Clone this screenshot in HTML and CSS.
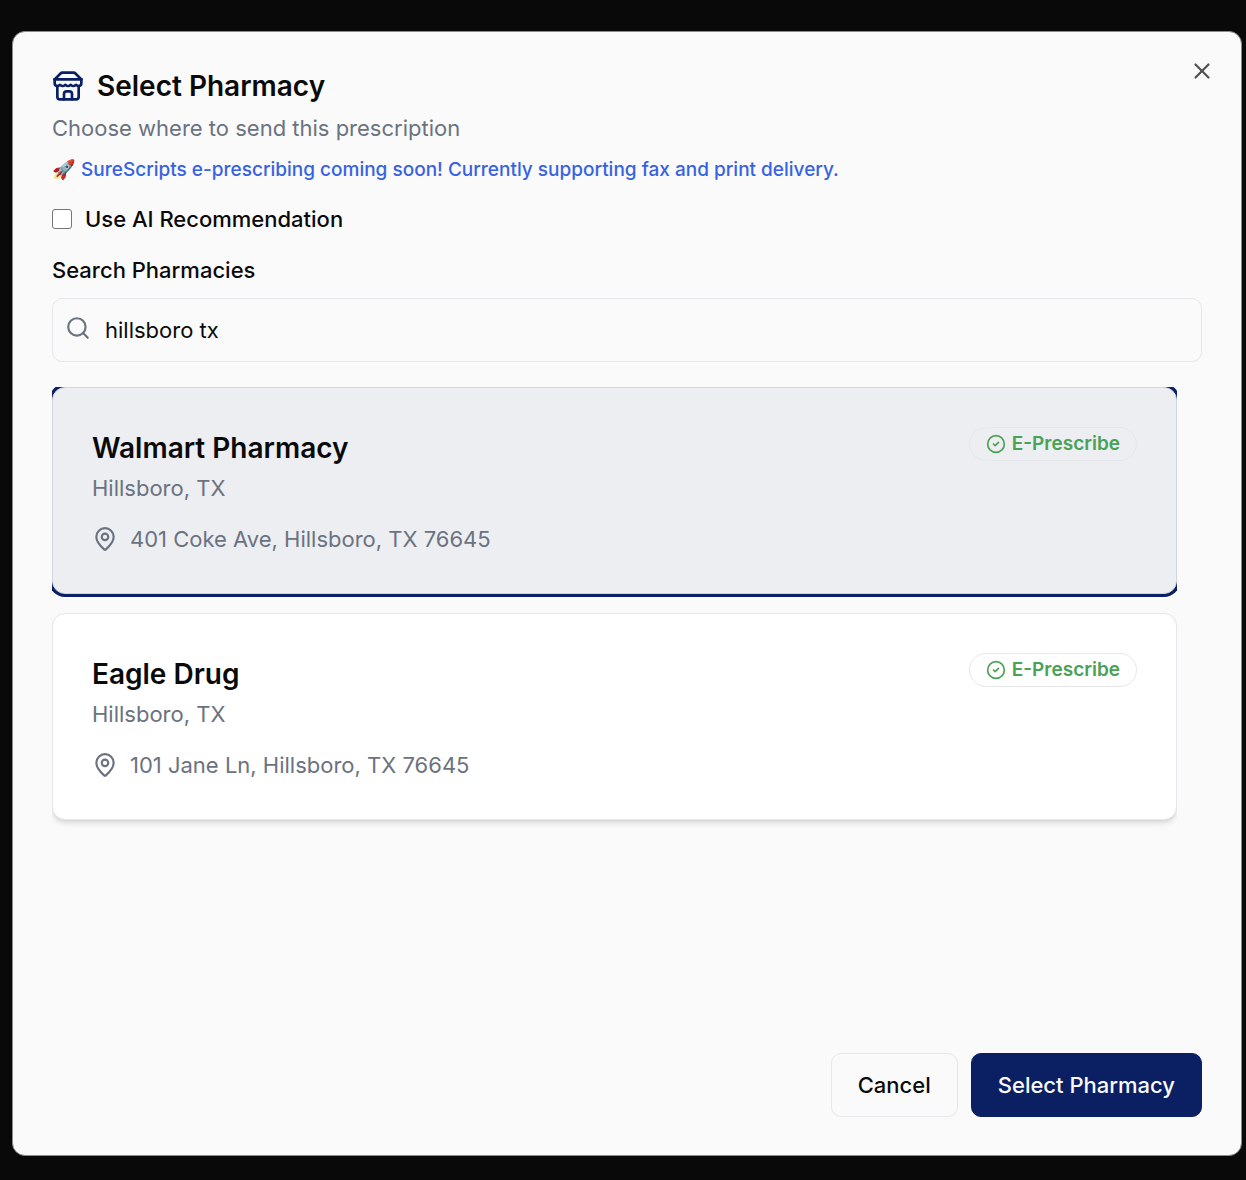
FILE: index.html
```html
<!DOCTYPE html>
<html lang="en">
<head>
<meta charset="utf-8">
<meta name="viewport" content="width=device-width, initial-scale=1">
<title>Select Pharmacy</title>
<link rel="stylesheet" href="styles.css">
</head>
<body>
<main class="dialog" role="dialog" aria-labelledby="dialog-title">
  <header class="header">
    <div class="header-text">
      <h1 class="title" id="dialog-title">
        <svg class="icon icon-store" viewBox="0 0 24 24" aria-hidden="true"><path d="m2 7 4.41-4.41A2 2 0 0 1 7.83 2h8.34a2 2 0 0 1 1.42.59L22 7"/><path d="M4 12v8a2 2 0 0 0 2 2h12a2 2 0 0 0 2-2v-8"/><path d="M15 22v-4a2 2 0 0 0-2-2h-2a2 2 0 0 0-2 2v4"/><path d="M2 7h20"/><path d="M22 7v3a2 2 0 0 1-2 2a2.7 2.7 0 0 1-1.59-.63.7.7 0 0 0-.82 0A2.7 2.7 0 0 1 16 12a2.7 2.7 0 0 1-1.59-.63.7.7 0 0 0-.82 0A2.7 2.7 0 0 1 12 12a2.7 2.7 0 0 1-1.59-.63.7.7 0 0 0-.82 0A2.7 2.7 0 0 1 8 12a2.7 2.7 0 0 1-1.59-.63.7.7 0 0 0-.82 0A2.7 2.7 0 0 1 4 12a2 2 0 0 1-2-2V7"/></svg>
        Select Pharmacy
      </h1>
      <p class="subtitle">Choose where to send this prescription</p>
      <p class="notice">🚀 SureScripts e-prescribing coming soon! Currently supporting fax and print delivery.</p>
    </div>
    <button class="close" type="button" aria-label="Close">
      <svg class="icon icon-close" viewBox="0 0 24 24" aria-hidden="true"><path d="M18 6 6 18"/><path d="m6 6 12 12"/></svg>
    </button>
  </header>

  <label class="check-row"><input class="checkbox" type="checkbox">Use AI Recommendation</label>

  <div class="search">
    <label class="search-label" for="search">Search Pharmacies</label>
    <div class="search-box">
      <svg class="icon icon-search" viewBox="0 0 24 24" aria-hidden="true"><circle cx="11" cy="11" r="8"/><path d="m21 21-4.3-4.3"/></svg>
      <input class="search-input" id="search" type="text" value="hillsboro tx">
    </div>
  </div>

  <section class="results" aria-label="Pharmacies">
    <article class="card card-selected">
      <div class="card-top">
        <div>
          <h2 class="card-name">Walmart Pharmacy</h2>
          <p class="card-city">Hillsboro, TX</p>
        </div>
        <span class="badge"><svg class="icon icon-check" viewBox="0 0 24 24" aria-hidden="true"><circle cx="12" cy="12" r="10"/><path d="m9 12 2 2 4-4"/></svg>E-Prescribe</span>
      </div>
      <p class="address"><svg class="icon icon-pin" viewBox="0 0 24 24" aria-hidden="true"><path d="M20 10c0 4.993-5.539 10.193-7.399 11.799a1 1 0 0 1-1.202 0C9.539 20.193 4 14.993 4 10a8 8 0 0 1 16 0"/><circle cx="12" cy="10" r="3"/></svg>401 Coke Ave, Hillsboro, TX 76645</p>
    </article>
    <article class="card">
      <div class="card-top">
        <div>
          <h2 class="card-name">Eagle Drug</h2>
          <p class="card-city">Hillsboro, TX</p>
        </div>
        <span class="badge"><svg class="icon icon-check" viewBox="0 0 24 24" aria-hidden="true"><circle cx="12" cy="12" r="10"/><path d="m9 12 2 2 4-4"/></svg>E-Prescribe</span>
      </div>
      <p class="address"><svg class="icon icon-pin" viewBox="0 0 24 24" aria-hidden="true"><path d="M20 10c0 4.993-5.539 10.193-7.399 11.799a1 1 0 0 1-1.202 0C9.539 20.193 4 14.993 4 10a8 8 0 0 1 16 0"/><circle cx="12" cy="10" r="3"/></svg>101 Jane Ln, Hillsboro, TX 76645</p>
    </article>
  </section>

  <footer class="footer">
    <button class="btn btn-outline" type="button">Cancel</button>
    <button class="btn btn-primary" type="button">Select Pharmacy</button>
  </footer>
</main>
</body>
</html>
```
FILE: styles.css
```css
:root {
  --navy: #0a2063;
  --ink: #0a0a0b;
  --muted: #6b7280;
  --surface: #fafafa;
  --line: #e5e7eb;
}

*, *::before, *::after { box-sizing: border-box; }

body {
  margin: 0;
  min-height: 100vh;
  display: flex;
  padding: 31px 4px 24px 12px;
  background: #090909;
  color: var(--ink);
  font-family: Inter, "Liberation Sans", sans-serif;
  font-size: 22px;
  line-height: 32px;
}

h1, h2, p { margin: 0; }

button, input { font: inherit; color: inherit; }

.icon {
  flex: none;
  fill: none;
  stroke: currentColor;
  stroke-width: 2;
  stroke-linecap: round;
  stroke-linejoin: round;
}

.dialog {
  flex: 1;
  display: flex;
  flex-direction: column;
  padding: 38px 39px;
  background: var(--surface);
  border: 1px solid #8a8a8a;
  border-radius: 13px;
}

.header {
  display: flex;
  justify-content: space-between;
  align-items: flex-start;
}

.title {
  display: flex;
  align-items: center;
  gap: 13px;
  font-size: 28px;
  font-weight: 600;
}

.icon-store { width: 32px; height: 32px; color: var(--navy); }

.subtitle { margin-top: 10px; color: var(--muted); }

.notice {
  margin-top: 13px;
  font-size: 19px;
  line-height: 26px;
  font-weight: 500;
  color: #3662e3;
}

.close {
  display: flex;
  margin: -12px -13px 0 0;
  padding: 0;
  border: 0;
  background: none;
  color: #505050;
}

.icon-close { width: 26px; height: 26px; }

.check-row {
  display: flex;
  align-items: center;
  gap: 13px;
  margin-top: 20px;
  font-weight: 500;
}

.checkbox {
  appearance: none;
  width: 20px;
  height: 20px;
  margin: 0;
  background: #fff;
  border: 1px solid #767676;
  border-radius: 3px;
}

.checkbox:checked { background: var(--navy); }

.search { margin-top: 19px; }

.search-label { display: block; font-weight: 500; }

.search-box {
  display: flex;
  align-items: center;
  gap: 14px;
  height: 64px;
  margin-top: 12px;
  padding: 0 12px;
  border: 1px solid var(--line);
  border-radius: 10px;
}

.icon-search { width: 26px; height: 26px; margin-bottom: 4px; color: var(--muted); }

.search-input {
  flex: 1;
  min-width: 0;
  padding: 0;
  border: 0;
  outline: 0;
  background: none;
}

/* The list clips its overflow, so rings and shadows are cut at its edges. */
.results {
  flex: 1;
  display: flex;
  flex-direction: column;
  gap: 19px;
  margin: 25px 25px 0 0;
  overflow: hidden;
}

.card {
  padding: 39px 39px 38px;
  background: #fff;
  border: 1px solid var(--line);
  border-radius: 13px;
  box-shadow: 0 4px 6px -1px #0000001f, 0 2px 4px -2px #0000001a;
}

.card-selected {
  background: #edeef2;
  border-color: #d0d4df;
  box-shadow: 0 0 0 3px var(--navy);
}

.card-top {
  display: flex;
  justify-content: space-between;
  align-items: flex-start;
}

.card-name {
  margin-bottom: 2px;
  font-size: 28px;
  line-height: 43px;
  font-weight: 600;
}

.card-city { color: var(--muted); }

.badge {
  display: inline-flex;
  align-items: center;
  gap: 6px;
  height: 34px;
  padding: 0 16px;
  border: 1px solid var(--line);
  border-radius: 17px;
  color: #4ba154;
  font-size: 19px;
  font-weight: 600;
}

.icon-check { width: 20px; height: 20px; }

.address {
  display: flex;
  align-items: center;
  gap: 12px;
  margin-top: 19px;
  color: var(--muted);
}

.icon-pin { width: 26px; height: 26px; }

.footer {
  display: flex;
  justify-content: flex-end;
  gap: 13px;
}

.btn {
  height: 64px;
  padding: 0 26px;
  border: 1px solid var(--line);
  border-radius: 10px;
  background: var(--surface);
  font-weight: 500;
}

.btn-primary {
  background: var(--navy);
  border-color: var(--navy);
  color: #fafafa;
}
```
